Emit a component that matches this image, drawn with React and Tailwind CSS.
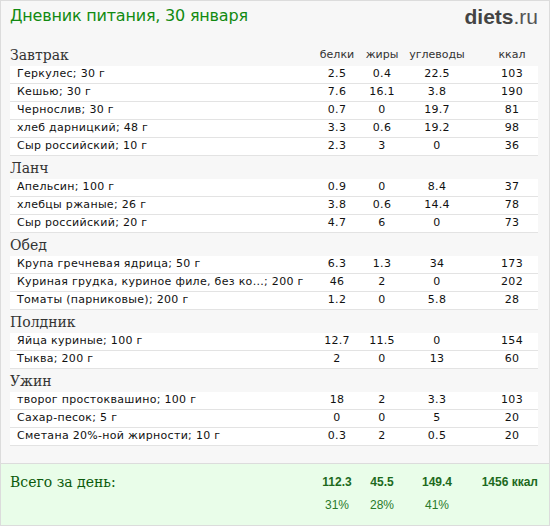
const sections = [
  {
    title: 'Завтрак',
    items: [
      ['Геркулес; 30 г', '2.5', '0.4', '22.5', '103'],
      ['Кешью; 30 г', '7.6', '16.1', '3.8', '190'],
      ['Чернослив; 30 г', '0.7', '0', '19.7', '81'],
      ['хлеб дарницкий; 48 г', '3.3', '0.6', '19.2', '98'],
      ['Сыр российский; 10 г', '2.3', '3', '0', '36'],
    ],
  },
  {
    title: 'Ланч',
    items: [
      ['Апельсин; 100 г', '0.9', '0', '8.4', '37'],
      ['хлебцы ржаные; 26 г', '3.8', '0.6', '14.4', '78'],
      ['Сыр российский; 20 г', '4.7', '6', '0', '73'],
    ],
  },
  {
    title: 'Обед',
    items: [
      ['Крупа гречневая ядрица; 50 г', '6.3', '1.3', '34', '173'],
      ['Куриная грудка, куриное филе, без ко...; 200 г', '46', '2', '0', '202'],
      ['Томаты (парниковые); 200 г', '1.2', '0', '5.8', '28'],
    ],
  },
  {
    title: 'Полдник',
    items: [
      ['Яйца куриные; 100 г', '12.7', '11.5', '0', '154'],
      ['Тыква; 200 г', '2', '0', '13', '60'],
    ],
  },
  {
    title: 'Ужин',
    items: [
      ['творог простоквашино; 100 г', '18', '2', '3.3', '103'],
      ['Сахар-песок; 5 г', '0', '0', '5', '20'],
      ['Сметана 20%-ной жирности; 10 г', '0.3', '2', '0.5', '20'],
    ],
  },
];

const sans = "font-['DejaVu_Sans',Verdana,sans-serif]";
const serif = "font-['DejaVu_Serif',Georgia,serif]";

const Section = ({ section, first }) => (
  <div>
    <div className="flex h-[23px] items-end pb-[2px]">
      <div className={`flex-1 text-[14px] leading-[18px] text-[#333] ${serif}`}>{section.title}</div>
      {first && (
        <div className={`flex text-[11px] leading-[18px] text-[#333] ${sans}`}>
          <div className="w-[50px] text-center">белки</div>
          <div className="w-[40px] text-center">жиры</div>
          <div className="w-[70px] text-center">углеводы</div>
          <div className="w-[66px] pl-[14px] text-center">ккал</div>
        </div>
      )}
    </div>
    {section.items.map((item) => (
      <div
        key={item[0]}
        className={`flex h-[18px] items-center bg-white border-b border-[#e3e3e3] text-[11px] text-[#111] tracking-[0.3px] ${sans}`}
      >
        <div className="flex-1 pl-[7px] whitespace-nowrap overflow-hidden">{item[0]}</div>
        <div className="w-[50px] text-center">{item[1]}</div>
        <div className="w-[40px] text-center">{item[2]}</div>
        <div className="w-[70px] text-center">{item[3]}</div>
        <div className="w-[66px] pl-[14px] text-center">{item[4]}</div>
      </div>
    ))}
  </div>
);

const App = () => {
  return (
    <div className="w-[550px] h-[526px] bg-[#f7f7f7] border border-[#dcdcdc] flex flex-col">
      <div className="h-[30px] flex items-center justify-between pl-[9px] pr-[11px]">
        <div className={`text-[16px] text-[#118a11] tracking-[-0.2px] ${sans}`}>Дневник питания, 30 января</div>
        <div className="font-['Liberation_Sans',Arial,sans-serif] text-[21px] leading-none">
          <span className="font-bold text-[#444]">diets</span>
          <span className="text-[#555]">.ru</span>
        </div>
      </div>

      <div className="pt-[12px] pl-[9px] pr-[11px]">
        {sections.map((s, i) => (
          <Section key={s.title} section={s} first={i === 0} />
        ))}
      </div>

      <div className="mt-[17px] flex-1 border-t border-[#dcdcdc] bg-[#e9fde9] pl-[9px] pr-[11px]">
        <div className="flex h-[18px] mt-[9px] items-center">
          <div className={`flex-1 text-[14px] text-[#0b5a0b] ${serif}`}>Всего за день:</div>
          <div className="flex font-['Liberation_Sans',Arial,sans-serif] font-bold text-[12px] text-[#1d6a1d]">
            <div className="w-[50px] text-center">112.3</div>
            <div className="w-[40px] text-center">45.5</div>
            <div className="w-[70px] text-center">149.4</div>
            <div className="w-[66px] text-right whitespace-nowrap">1456 ккал</div>
          </div>
        </div>
        <div className="flex h-[18px] mt-[5px] items-center justify-end font-['Liberation_Sans',Arial,sans-serif] text-[12px] text-[#2a7a2a]">
          <div className="w-[50px] text-center">31%</div>
          <div className="w-[40px] text-center">28%</div>
          <div className="w-[70px] text-center">41%</div>
          <div className="w-[66px]"></div>
        </div>
      </div>
    </div>
  );
};

export default App;
